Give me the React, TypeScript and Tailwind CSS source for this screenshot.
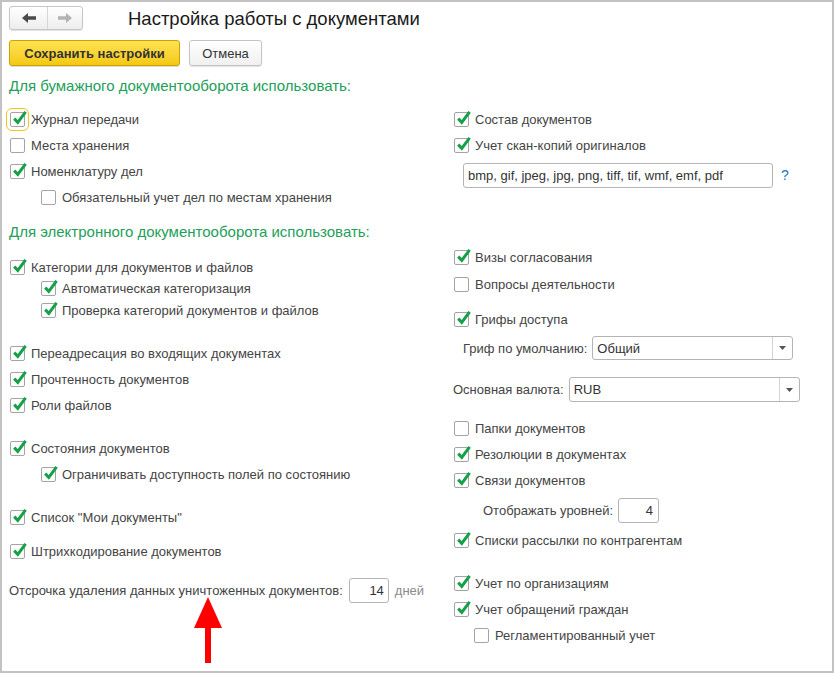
import React from "react";

const TEXT = "text-[#444]";

function Box({ checked, focus }: { checked?: boolean; focus?: boolean }) {
  return (
    <span
      className={
        "relative w-[15px] h-[15px] shrink-0 border border-[#a4a4a4] rounded-[2px] bg-white " +
        (focus ? "outline outline-1 outline-[#f0c419] outline-offset-[3px]" : "")
      }
    >
      {checked && (
        <svg
          className="absolute left-[1px] top-[-3px]"
          width="16"
          height="16"
          viewBox="0 0 16 16"
        >
          <path
            d="M2.2 8.6 L5.8 12.4 L13.6 1.8"
            fill="none"
            stroke="#16a048"
            strokeWidth="3"
            strokeLinecap="butt"
            strokeLinejoin="miter"
          />
        </svg>
      )}
    </span>
  );
}

function Row({
  mt,
  indent,
  checked,
  focus,
  label,
}: {
  mt: string;
  indent?: string;
  checked?: boolean;
  focus?: boolean;
  label: string;
}) {
  return (
    <div className={"flex items-center h-[20px] " + mt + " " + (indent ?? "pl-[1px]")}>
      <Box checked={checked} focus={focus} />
      <span className={"ml-[6px] pt-[2px] whitespace-nowrap " + TEXT}>{label}</span>
    </div>
  );
}

function Select({ width, value }: { width: string; value: string }) {
  return (
    <div
      className={
        "flex h-full border border-[#b4b4b4] rounded-[3px] bg-white " + width
      }
    >
      <div className="flex-1 flex items-center pl-[4px] pt-[1px] text-[#333]">{value}</div>
      <div className="w-[20px] border-l border-[#d4d4d4] flex items-center justify-center">
        <svg width="7" height="4" viewBox="0 0 7 4">
          <path d="M0 0 L7 0 L3.5 4 Z" fill="#555" />
        </svg>
      </div>
    </div>
  );
}

export default function App() {
  return (
    <div className="relative w-[834px] h-[673px] border-2 border-[#c2c2c2] bg-white font-['Liberation_Sans',Arial,sans-serif] text-[13px] overflow-hidden">
      <div className="pl-[7px] pt-[4px]">
        {/* header */}
        <div className="flex items-center h-[24px]">
          <div className="flex w-[74px] h-[24px] border border-[#c6c6c6] rounded-[3px] bg-gradient-to-b from-white to-[#ededed] shadow-[0_1px_1px_rgba(0,0,0,0.12)]">
            <div className="w-[38px] flex items-center justify-center border-r border-[#d6d6d6]">
              <svg width="14" height="10" viewBox="0 0 14 10">
                <path d="M0 5 L6 0 L6 3.3 L14 3.3 L14 6.7 L6 6.7 L6 10 Z" fill="#4a4a4a" />
              </svg>
            </div>
            <div className="flex-1 flex items-center justify-center">
              <svg width="14" height="10" viewBox="0 0 14 10">
                <path d="M14 5 L8 0 L8 3.3 L0 3.3 L0 6.7 L8 6.7 L8 10 Z" fill="#b3b3b3" />
              </svg>
            </div>
          </div>
          <div className="ml-[45px] pt-[2px] text-[18.5px] text-[#1a1a1a] whitespace-nowrap">
            Настройка работы с документами
          </div>
        </div>

        {/* buttons */}
        <div className="flex mt-[10px] h-[26px] gap-[9px]">
          <button className="w-[171px] h-full pt-[1px] rounded-[3px] border border-[#c8a400] bg-gradient-to-b from-[#ffe34f] to-[#f4c80c] font-bold text-[#333] shadow-[0_1px_1px_rgba(0,0,0,0.15)]">
            Сохранить настройки
          </button>
          <button className="w-[73px] h-full pt-[1px] rounded-[3px] border border-[#c4c4c4] bg-gradient-to-b from-white to-[#f0f0f0] text-[#333] shadow-[0_1px_1px_rgba(0,0,0,0.12)]">
            Отмена
          </button>
        </div>

        {/* heading 1 */}
        <div className="mt-[10px] h-[20px] flex items-center text-[15px] text-[#22a05a] whitespace-nowrap">
          Для бумажного документооборота использовать:
        </div>

        {/* section 1 */}
        <div className="grid grid-cols-[444px_1fr]">
          <div className="flex flex-col">
            <Row mt="mt-[13px]" checked focus label="Журнал передачи" />
            <Row mt="mt-[6px]" label="Места хранения" />
            <Row mt="mt-[6px]" checked label="Номенклатуру дел" />
            <Row mt="mt-[6px]" indent="pl-[32px]" label="Обязательный учет дел по местам хранения" />
          </div>
          <div className="flex flex-col">
            <Row mt="mt-[13px]" checked label="Состав документов" />
            <Row mt="mt-[6px]" checked label="Учет скан-копий оригиналов" />
            <div className="mt-[8px] h-[25px] flex items-center pl-[10px]">
              <div className="w-[310px] h-full border border-[#b4b4b4] rounded-[3px] flex items-center pl-[4px] pt-[1px] text-[#333] whitespace-nowrap">
                bmp, gif, jpeg, jpg, png, tiff, tif, wmf, emf, pdf
              </div>
              <span className="ml-[8px] text-[14px] text-[#1f72c4]">?</span>
            </div>
          </div>
        </div>

        {/* heading 2 */}
        <div className="mt-[15px] h-[20px] flex items-center text-[15px] text-[#22a05a] whitespace-nowrap">
          Для электронного документооборота использовать:
        </div>

        {/* section 2 */}
        <div className="grid grid-cols-[444px_1fr]">
          <div className="flex flex-col">
            <Row mt="mt-[15px]" checked label="Категории для документов и файлов" />
            <Row mt="mt-[1px]" indent="pl-[32px]" checked label="Автоматическая категоризация" />
            <Row mt="mt-[2px]" indent="pl-[32px]" checked label="Проверка категорий документов и файлов" />
            <Row mt="mt-[23px]" checked label="Переадресация во входящих документах" />
            <Row mt="mt-[6px]" checked label="Прочтенность документов" />
            <Row mt="mt-[6px]" checked label="Роли файлов" />
            <Row mt="mt-[23px]" checked label="Состояния документов" />
            <Row mt="mt-[6px]" indent="pl-[32px]" checked label="Ограничивать доступность полей по состоянию" />
            <Row mt="mt-[23px]" checked label='Список "Мои документы"' />
            <Row mt="mt-[14px]" checked label="Штрихкодирование документов" />
            <div className="mt-[17px] h-[25px] flex items-center">
              <span className={"whitespace-nowrap pt-[1px] " + TEXT}>
                Отсрочка удаления данных уничтоженных документов:
              </span>
              <div className="ml-[6px] w-[40px] h-full border border-[#b4b4b4] rounded-[3px] flex items-center justify-end pr-[4px] pt-[1px] text-[#333]">
                14
              </div>
              <span className="ml-[6px] pt-[1px] text-[#8a8a8a]">дней</span>
            </div>
          </div>
          <div className="flex flex-col">
            <Row mt="mt-[5px]" checked label="Визы согласования" />
            <Row mt="mt-[7px]" label="Вопросы деятельности" />
            <Row mt="mt-[15px]" checked label="Грифы доступа" />
            <div className="mt-[7px] h-[24px] flex items-center pl-[10px]">
              <span className={"whitespace-nowrap pt-[1px] " + TEXT}>Гриф по умолчанию:</span>
              <div className="ml-[5px] h-full">
                <Select width="w-[201px]" value="Общий" />
              </div>
            </div>
            <div className="mt-[17px] h-[25px] flex items-center">
              <span className={"whitespace-nowrap pt-[1px] " + TEXT}>Основная валюта:</span>
              <div className="ml-[5px] h-full">
                <Select width="w-[231px]" value="RUB" />
              </div>
            </div>
            <Row mt="mt-[16px]" label="Папки документов" />
            <Row mt="mt-[6px]" checked label="Резолюции в документах" />
            <Row mt="mt-[6px]" checked label="Связи документов" />
            <div className="mt-[8px] h-[25px] flex items-center pl-[30px]">
              <span className={"whitespace-nowrap pt-[1px] " + TEXT}>Отображать уровней:</span>
              <div className="ml-[5px] w-[41px] h-full border border-[#b4b4b4] rounded-[3px] flex items-center justify-end pr-[5px] pt-[1px] text-[#333]">
                4
              </div>
            </div>
            <Row mt="mt-[7px]" checked label="Списки рассылки по контрагентам" />
            <Row mt="mt-[23px]" checked label="Учет по организациям" />
            <Row mt="mt-[6px]" checked label="Учет обращений граждан" />
            <Row mt="mt-[6px]" indent="pl-[21px]" label="Регламентированный учет" />
          </div>
        </div>
      </div>

      {/* red arrow annotation */}
      <svg
        className="absolute left-[190px] top-[595px]"
        width="32"
        height="68"
        viewBox="0 0 32 68"
      >
        <path d="M16 0 L2 31 L30 31 Z" fill="#ff0000" />
        <rect x="13" y="29" width="6" height="37" fill="#ff0000" />
      </svg>
    </div>
  );
}
